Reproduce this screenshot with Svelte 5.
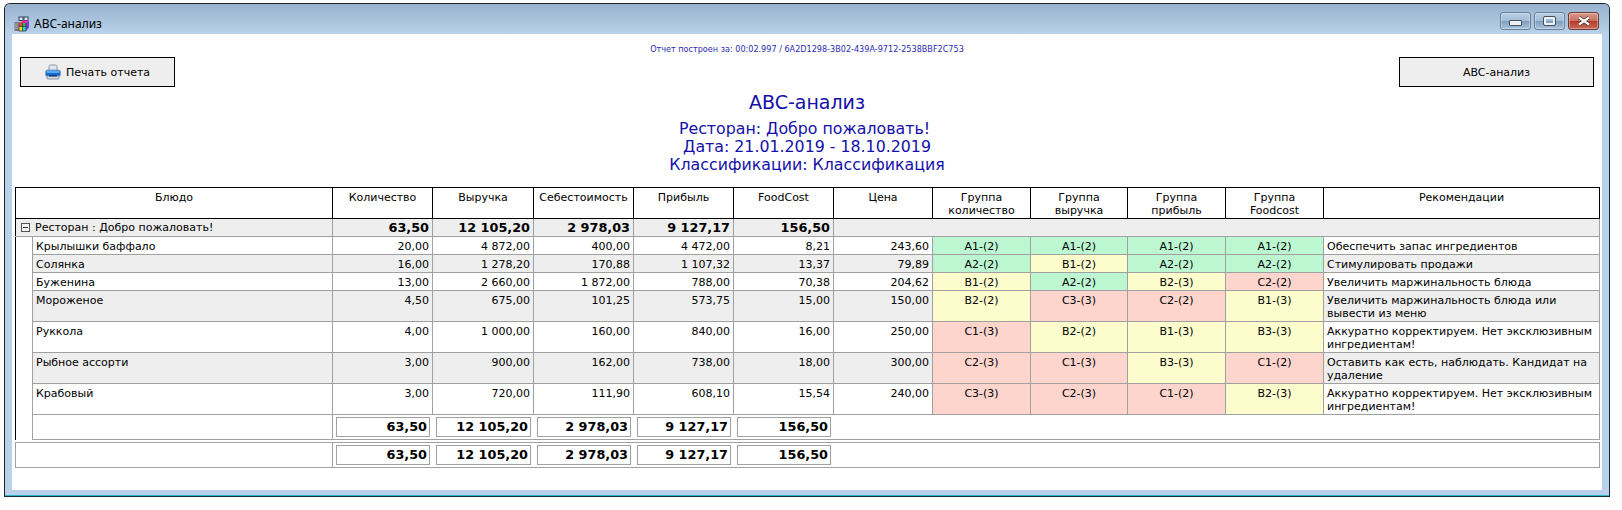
<script>
	const cols = [17, 300, 100, 101, 100, 100, 100, 99, 98, 97, 98, 98, 276];

	const rows = [
		{ name: 'Крылышки баффало', nums: ['20,00', '4 872,00', '400,00', '4 472,00', '8,21', '243,60'], groups: ['A1-(2)', 'A1-(2)', 'A1-(2)', 'A1-(2)'], rec: 'Обеспечить запас ингредиентов' },
		{ name: 'Солянка', nums: ['16,00', '1 278,20', '170,88', '1 107,32', '13,37', '79,89'], groups: ['A2-(2)', 'B1-(2)', 'A2-(2)', 'A2-(2)'], rec: 'Стимулировать продажи' },
		{ name: 'Буженина', nums: ['13,00', '2 660,00', '1 872,00', '788,00', '70,38', '204,62'], groups: ['B1-(2)', 'A2-(2)', 'B2-(3)', 'C2-(2)'], rec: 'Увеличить маржинальность блюда' },
		{ name: 'Мороженое', nums: ['4,50', '675,00', '101,25', '573,75', '15,00', '150,00'], groups: ['B2-(2)', 'C3-(3)', 'C2-(2)', 'B1-(3)'], rec: 'Увеличить маржинальность блюда или вывести из меню', tall: true },
		{ name: 'Руккола', nums: ['4,00', '1 000,00', '160,00', '840,00', '16,00', '250,00'], groups: ['C1-(3)', 'B2-(2)', 'B1-(3)', 'B3-(3)'], rec: 'Аккуратно корректируем. Нет эксклюзивным ингредиентам!', tall: true },
		{ name: 'Рыбное ассорти', nums: ['3,00', '900,00', '162,00', '738,00', '18,00', '300,00'], groups: ['C2-(3)', 'C1-(3)', 'B3-(3)', 'C1-(2)'], rec: 'Оставить как есть, наблюдать. Кандидат на удаление', tall: true },
		{ name: 'Крабовый', nums: ['3,00', '720,00', '111,90', '608,10', '15,54', '240,00'], groups: ['C3-(3)', 'C2-(3)', 'C1-(2)', 'B2-(3)'], rec: 'Аккуратно корректируем. Нет эксклюзивным ингредиентам!', tall: true }
	];

	const totals = ['63,50', '12 105,20', '2 978,03', '9 127,17', '156,50'];
	const headers = ['Количество', 'Выручка', 'Себестоимость', 'Прибыль', 'FoodCost', 'Цена'];
	const groupHeaders = [['Группа', 'количество'], ['Группа', 'выручка'], ['Группа', 'прибыль'], ['Группа', 'Foodcost']];

	// A = green, B = yellow, C = red
	const tone = (g) => ({ A: 'good', B: 'mid', C: 'bad' })[g[0]];
</script>

<div class="window">
	<header class="titlebar">
		<svg class="app-icon" viewBox="0 0 16 16" width="16" height="16" aria-hidden="true">
			<rect x="0.5" y="6" width="5" height="9" fill="#77787c" />
			<path d="M1 8h4M1 10h4M1 12h4" stroke="#c8c8cc" stroke-width="0.7" />
			<rect x="5" y="1" width="4" height="3.5" fill="#dfe6f2" stroke="#33405c" />
			<rect x="10" y="1" width="4" height="3.5" fill="#dfe6f2" stroke="#33405c" />
			<path d="M5 7 9 4.5h6L12 7z" fill="#ee2f9a" />
			<rect x="5" y="7" width="3.5" height="3.5" fill="#ef4b2c" />
			<rect x="8.5" y="7" width="3.5" height="3.5" fill="#37b04a" />
			<rect x="5" y="10.5" width="3.5" height="4.5" fill="#ffd91f" />
			<rect x="8.5" y="10.5" width="3.5" height="4.5" fill="#1fd8d0" />
			<path d="M12 7 15 4.5v7L12 15z" fill="#7a3de0" />
			<path d="M5 7v8h7V7M8.5 7v8M5 10.5h7" stroke="#2b2b33" stroke-width="0.7" fill="none" />
		</svg>
		<span class="title">ABC-анализ</span>
		<div class="controls">
			<span class="ctl"><i class="min"></i></span>
			<span class="ctl"><i class="max"></i></span>
			<span class="ctl close">
				<svg viewBox="0 0 14 10" width="14" height="10" aria-hidden="true">
					<path d="M2 1.5 12 8.5M12 1.5 2 8.5" stroke="#3e2a2a" stroke-width="3.6" />
					<path d="M2 1.5 12 8.5M12 1.5 2 8.5" stroke="#fff" stroke-width="2.2" />
				</svg>
			</span>
		</div>
	</header>

	<main class="content">
		<p class="built">Отчет построен за: 00:02.997 / 6A2D1298-3B02-439A-9712-2538BBF2C753</p>

		<div class="toolbar">
			<button class="btn print">
				<svg viewBox="0 0 16 16" width="16" height="16" aria-hidden="true">
					<path d="M4 7V2.5Q4 1 5.5 1h5Q12 1 12 2.5V7z" fill="#dfe8f2" stroke="#8b97a5" />
					<rect x="0.5" y="6" width="15" height="6.5" rx="2" fill="#1569cc" stroke="#8fa0b2" />
					<rect x="1.5" y="6.5" width="13" height="2.5" rx="1" fill="#55aaf2" />
					<rect x="2" y="12" width="12" height="3" rx="1" fill="#d6dbe0" stroke="#8b97a5" />
					<rect x="4" y="11" width="8" height="1.5" fill="#0b3f88" />
				</svg>
				Печать отчета
			</button>
			<button class="btn report">ABC-анализ</button>
		</div>

		<div class="heading">
			<h1>ABC-анализ</h1>
			<p>Ресторан: Добро пожаловать!&nbsp;</p>
			<p>Дата: 21.01.2019 - 18.10.2019</p>
			<p>Классификации: Классификация</p>
		</div>

		<table class="report-table">
			<colgroup>
				{#each cols as w}<col style="width: {w}px" />{/each}
			</colgroup>
			<thead>
				<tr>
					<th colspan="2">Блюдо</th>
					{#each headers as h}<th>{h}</th>{/each}
					{#each groupHeaders as g}<th>{g[0]}<br />{g[1]}</th>{/each}
					<th>Рекомендации</th>
				</tr>
			</thead>
			<tbody>
				<tr class="group">
					<td colspan="2" class="group-name"><span class="toggle"></span>Ресторан : Добро пожаловать!</td>
					{#each totals as t}<td class="num bold">{t}</td>{/each}
					<td colspan="6"></td>
				</tr>
				{#each rows as row, i}
					<tr class:tall={row.tall} class:alt={i % 2 === 1}>
						<td class="indent"></td>
						<td>{row.name}</td>
						{#each row.nums as n}<td class="num">{n}</td>{/each}
						{#each row.groups as g}<td class="grp {tone(g)}">{g}</td>{/each}
						<td class="rec">{row.rec}</td>
					</tr>
				{/each}
				<tr class="sum">
					<td class="indent"></td>
					<td></td>
					{#each totals as t}<td class="box-cell"><div class="box">{t}</div></td>{/each}
					<td colspan="6"></td>
				</tr>
			</tbody>
		</table>

		<table class="report-table grand">
			<colgroup>
				{#each cols as w}<col style="width: {w}px" />{/each}
			</colgroup>
			<tbody>
				<tr class="sum">
					<td colspan="2"></td>
					{#each totals as t}<td class="box-cell"><div class="box">{t}</div></td>{/each}
					<td colspan="6"></td>
				</tr>
			</tbody>
		</table>
	</main>
</div>

<style>
	:global(body) {
		background: #fff;
	}

	.window {
		width: 1606px;
		height: 494px;
		box-sizing: border-box;
		margin: 3px 0 0 4px;
		display: flex;
		flex-direction: column;
		border: 1px solid #222;
		border-bottom-color: #15303a;
		border-right-color: #15303a;
		border-radius: 6px 6px 0 0;
		background: #b9d1ea;
		padding: 0 7px 6px;
		box-shadow: inset 0 -1px 0 #2cb5c8;
		font-family: 'DejaVu Sans', Verdana, sans-serif;
		font-size: 11px;
		color: #000;
	}

	/* --- TITLE BAR --- */
	.titlebar {
		height: 30px;
		box-sizing: border-box;
		padding: 9px 10px 0 9px;
		flex: none;
		display: flex;
		align-items: center;
		gap: 4px;
		margin: 0 -7px;
		background: linear-gradient(#98b3cf, #b9d1ea);
		border-radius: 5px 5px 0 0;
	}

	.title {
		font-family: 'Noto Sans', Tahoma, sans-serif;
		font-size: 12px;
		color: #000;
	}

	.controls {
		margin-left: auto;
		display: flex;
		gap: 3px;
		margin-top: -5px;
	}

	.ctl {
		width: 31px;
		height: 18px;
		box-sizing: border-box;
		display: flex;
		align-items: center;
		justify-content: center;
		border: 1px solid #6a7f98;
		border-radius: 3px;
		background: linear-gradient(#b9cfe4 0%, #a3bdd8 48%, #7f9ebe 52%, #a8c2dc 100%);
		box-shadow: inset 0 0 0 1px rgba(255, 255, 255, 0.35);
	}

	.ctl.close {
		border-color: #6e3a3a;
		background: linear-gradient(#dd9a88 0%, #c9705e 48%, #b53c28 52%, #c86a55 100%);
	}

	.min {
		display: block;
		width: 11px;
		height: 4px;
		margin-top: 3px;
		background: #eef2f6;
		border: 1px solid #44505e;
		border-radius: 1px;
	}

	.max {
		display: block;
		width: 7px;
		height: 4px;
		border: 2px solid #eef2f6;
		outline: 1px solid #44505e;
		border-radius: 1px;
	}

	/* --- CONTENT --- */
	.content {
		flex: 1;
		min-height: 0;
		background: #fff;
		padding: 0 3px;
		margin: 0;
		overflow: hidden;
	}

	.built {
		margin: 9px 0 0;
		height: 12px;
		line-height: 12px;
		text-align: center;
		font-size: 8.1px;
		color: #2b2bb0;
	}

	.toolbar {
		display: flex;
		justify-content: space-between;
		margin: 2px 5px 0 5px;
	}

	.btn {
		height: 30px;
		box-sizing: border-box;
		border: 1px solid #000;
		background: #eee;
		font: inherit;
		color: #000;
		padding: 0;
		display: flex;
		align-items: center;
		justify-content: center;
		gap: 5px;
	}

	.print {
		width: 155px;
	}

	.report {
		width: 195px;
	}

	.heading {
		text-align: center;
		color: #1410a8;
		margin: 2px 0 13px;
	}

	.heading h1 {
		margin: 0 0 5px;
		font-size: 19px;
		font-weight: 400;
		line-height: 26px;
	}

	.heading p {
		margin: 0;
		font-size: 15.8px;
		line-height: 18px;
	}

	/* --- TABLE --- */
	.report-table {
		table-layout: fixed;
		border-collapse: collapse;
		width: 1584px;
		box-sizing: border-box;
		border-spacing: 0;
	}

	th {
		font-weight: 400;
		height: 31px;
		padding: 3px 2px 0;
		vertical-align: top;
		line-height: 13px;
		border: 1px solid #000;
		overflow: hidden;
		box-sizing: border-box;
	}

	td {
		border: 1px solid #a0a0a0;
		padding: 3px 3px 0;
		height: 18px;
		line-height: 13px;
		vertical-align: top;
		white-space: nowrap;
		box-sizing: border-box;
	}

	.alt td {
		background: #eee;
	}

	.tall td {
		height: 31px;
	}

	.group td {
		background: #eee;
		border-top: 1px solid #000;
		padding-top: 2px;
		height: 18px;
	}

	.group-name {
		border-left: 1px solid #000;
		padding-left: 5px;
	}

	.toggle {
		display: inline-block;
		width: 9px;
		height: 9px;
		box-sizing: border-box;
		margin: 0 5px -1px 0;
		border: 1px solid #555;
		background: linear-gradient(#333, #333) center / 5px 1px no-repeat #f4f4f4;
	}

	.indent,
	.alt td.indent {
		border-left: 1px solid #000;
		border-top-color: transparent;
		border-bottom-color: transparent;
		background: #fff;
	}

	.num {
		text-align: right;
	}

	.bold {
		font-weight: 700;
		font-size: 12.8px;
	}

	.grp {
		text-align: center;
	}

	.alt .good,
	.good {
		background: #bdf7d2;
	}

	.alt .mid,
	.mid {
		background: #fcfccd;
	}

	.alt .bad,
	.bad {
		background: #fdd5cc;
	}

	.rec {
		white-space: normal;
		line-height: 13px;
	}

	.sum td {
		height: 25px;
		padding: 0;
	}

	.sum .box-cell {
		border-left-color: transparent;
		border-right-color: transparent;
		padding: 2px 2px 0 3px;
	}

	.box {
		height: 20px;
		box-sizing: border-box;
		border: 1px solid #a0a0a0;
		text-align: right;
		font-weight: 700;
		font-size: 12.8px;
		line-height: 18px;
		padding-right: 2px;
	}

	.grand {
		margin-top: 2px;
	}
</style>
